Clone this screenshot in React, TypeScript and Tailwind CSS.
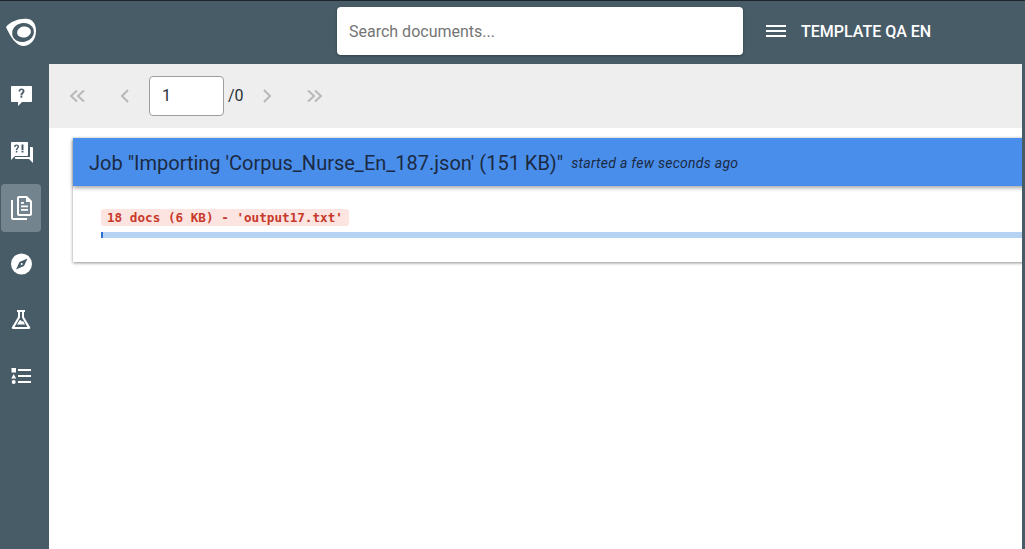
function Logo() {
  return (
    <svg width="32" height="30" viewBox="0 0 32 30">
      <path d="M1 10C6 4 15 1 23 2c6 1 8 7 8 12 0 8-5 15-13 15C11 29 5 19 1 10Z" fill="#fff" />
      <ellipse cx="18" cy="15.500" rx="11" ry="9.500" fill="#485c68" transform="rotate(-12 18 15.500)" />
      <ellipse cx="19" cy="15" rx="7" ry="5.500" fill="#fff" transform="rotate(-12 19 15)" />
    </svg>
  )
}

function NavIcon({ d, active }: { d: string; active?: boolean }) {
  return (
    <div
      className={`w-10 h-12 rounded-[4px] flex items-center justify-center ${active ? 'bg-[#74848e]' : ''}`}
    >
      <svg width="24" height="24" viewBox="0 0 24 24" fill="#fff">
        <path d={d} fillRule="evenodd" />
      </svg>
    </div>
  )
}

function PageChevron({ dir, double }: { dir: 'left' | 'right'; double?: boolean }) {
  const flip = dir === 'right' ? 'rotate-180' : ''
  return (
    <div className="w-12 h-12 shrink-0 flex items-center justify-center">
      <svg width="16" height="14" viewBox="0 0 16 14" fill="none" stroke="#b8b8b8" strokeWidth="2" className={flip}>
        {double ? (
          <>
            <path d="M8 1.500 2 7l6 5.500" />
            <path d="M15 1.500 9 7l6 5.500" />
          </>
        ) : (
          <path d="M11 1 5 7l6 6" />
        )}
      </svg>
    </div>
  )
}

const icons = {
  question:
    'M3 2h19c.6 0 1 .4 1 1v14c0 .6-.4 1-1 1h-9l-4 4v-4H3c-.6 0-1-.4-1-1V3c0-.6.4-1 1-1ZM9.500 7.500c0-2 1.300-3 3-3s3 1 3 2.700c0 2-2.200 2.300-2.200 4.300h-1.800c0-2.700 2.100-2.800 2.100-4.200 0-.7-.4-1.200-1.100-1.200s-1.200.5-1.200 1.400H9.500ZM11.500 12h1.800v1.800h-1.800V12Z',
  chat:
    'M3 2h15c.6 0 1 .4 1 1v12c0 .6-.4 1-1 1H6l-4 4V3c0-.6.4-1 1-1ZM5 7c0-1.600 1-2.500 2.500-2.500S10 5.300 10 6.700c0 1.700-1.800 1.900-1.800 3.500H6.800c0-2.200 1.700-2.300 1.700-3.500 0-.6-.4-1-.9-1-.6 0-1 .4-1 1.300H5ZM6.800 11h1.500v1.500H6.800V11ZM12.500 4.500h2v5.700h-2V4.500ZM12.500 11h2v1.500h-2V11ZM21 7h2c.6 0 1 .4 1 1v15l-4-4H7c-.6 0-1-.4-1-1v-1h15V7Z',
  docs:
    'M10 0h8l5 5v13c0 1.100-.9 2-2 2H10c-1.100 0-2-.9-2-2V2c0-1.100.9-2 2-2Zm0 2v16h11V6h-4V2h-7Zm2 7.500h7v1.800h-7V9.500Zm0 3.500h7v1.800h-7V13ZM12 6h3v1.800h-3V6ZM2 4h2v18h14v2H4c-1.100 0-2-.9-2-2V4Z',
  compass:
    'M12.500 1.500a10.500 10.500 0 1 0 0 21 10.500 10.500 0 0 0 0-21ZM18.500 6.500 15 14l-8 3.500L10.500 10l8-3.500ZM12.700 11a1 1 0 1 0 0 2 1 1 0 0 0 0-2Z',
  flask:
    'M8 2h8v2h-1v5l6 10c.7 1.200 0 2-1.200 2H4.200C3 21 2.300 20.200 3 19l6-10V4H8V2ZM11 4v5.600L5.600 19h12.800L13 9.600V4h-2ZM8 16.500l2.300-3.800c.6-.8 1.100-.9 1.700-.3.8.8 1.500 1.100 2.300.8l1.700 3.300H8Z',
  list:
    'M2.500 4h4.500v4.500H2.500V4Zm6.500 1h13v2H9V5Zm-4.300 5 2.500 4.500H2.200L4.700 10ZM9 11h13v2H9v-2ZM4.700 16a2 2 0 1 1 0 4 2 2 0 0 1 0-4ZM9 17h13v2H9v-2Z',
}

export default function App() {
  return (
    <div className="h-screen w-screen overflow-hidden bg-[#485c68] flex flex-col font-['Roboto',sans-serif] border-t border-t-[#1d262c]">
      <header className="h-[63px] shrink-0 flex items-center pb-[3px]">
        <div className="w-[49px] shrink-0 pl-[5px] mt-[2px]">
          <Logo />
        </div>
        <div className="ml-[288px] w-[406px] h-12 pt-[2px] bg-white rounded-[4px] shadow-[0_1px_3px_rgba(0,0,0,0.3)] flex items-center px-3">
          <span className="text-base text-[#757575]">Search documents...</span>
        </div>
        <div className="ml-[23px] flex flex-col gap-[3px]">
          <div className="w-5 h-[2px] bg-white" />
          <div className="w-5 h-[2px] bg-white" />
          <div className="w-5 h-[2px] bg-white" />
        </div>
        <span className="ml-[15px] pt-[2px] text-white text-base font-medium">TEMPLATE QA EN</span>
      </header>

      <div className="flex flex-1 min-h-0 pr-[3px]">
        <nav className="w-[49px] shrink-0 flex flex-col items-start gap-2 pl-[1px] pt-[8px]">
          <NavIcon d={icons.question} />
          <NavIcon d={icons.chat} />
          <NavIcon d={icons.docs} active />
          <NavIcon d={icons.compass} />
          <NavIcon d={icons.flask} />
          <NavIcon d={icons.list} />
        </nav>

        <main className="flex-1 min-w-0 bg-white overflow-hidden">
          <div className="h-16 bg-[#eeeeee] flex items-center pl-[4px]">
            <PageChevron dir="left" double />
            <PageChevron dir="left" />
            <div className="w-[75px] h-10 shrink-0 bg-white border border-[#9e9e9e] rounded-[4px] flex items-center pl-3 text-base text-[#263238]">
              1
            </div>
            <span className="w-[19px] pl-[4px] text-base text-[#263238]">/0</span>
            <PageChevron dir="right" />
            <PageChevron dir="right" double />
          </div>

          <div className="ml-6 mt-[10px] w-[980px] bg-white shadow-[0_1px_3px_rgba(0,0,0,0.45)]">
            <div className="h-12 pt-px bg-[#4a8eec] shadow-[0_2px_4px_rgba(0,0,0,0.35)] flex items-center pl-4 text-[#1a2a42]">
              <span className="text-[20px] leading-none">Job "Importing 'Corpus_Nurse_En_187.json' (151 KB)"</span>
              <span className="ml-2 text-sm italic tracking-[0.28px]">started a few seconds ago</span>
            </div>
            <div className="pl-7 pt-[23px] pb-6">
              <span className="block w-fit h-[17px] rounded-[3px] bg-[#fce4e0] px-[6px] font-['DejaVu_Sans_Mono',monospace] text-[12.65px] leading-[17px] font-bold text-[#c8392b]">
                18 docs (6 KB) - 'output17.txt'
              </span>
              <div className="mt-[6px] h-[6px] bg-[#b6d3f3]">
                <div className="w-[2px] h-full bg-[#2b6fd0]" />
              </div>
            </div>
          </div>
        </main>
      </div>
    </div>
  )
}
